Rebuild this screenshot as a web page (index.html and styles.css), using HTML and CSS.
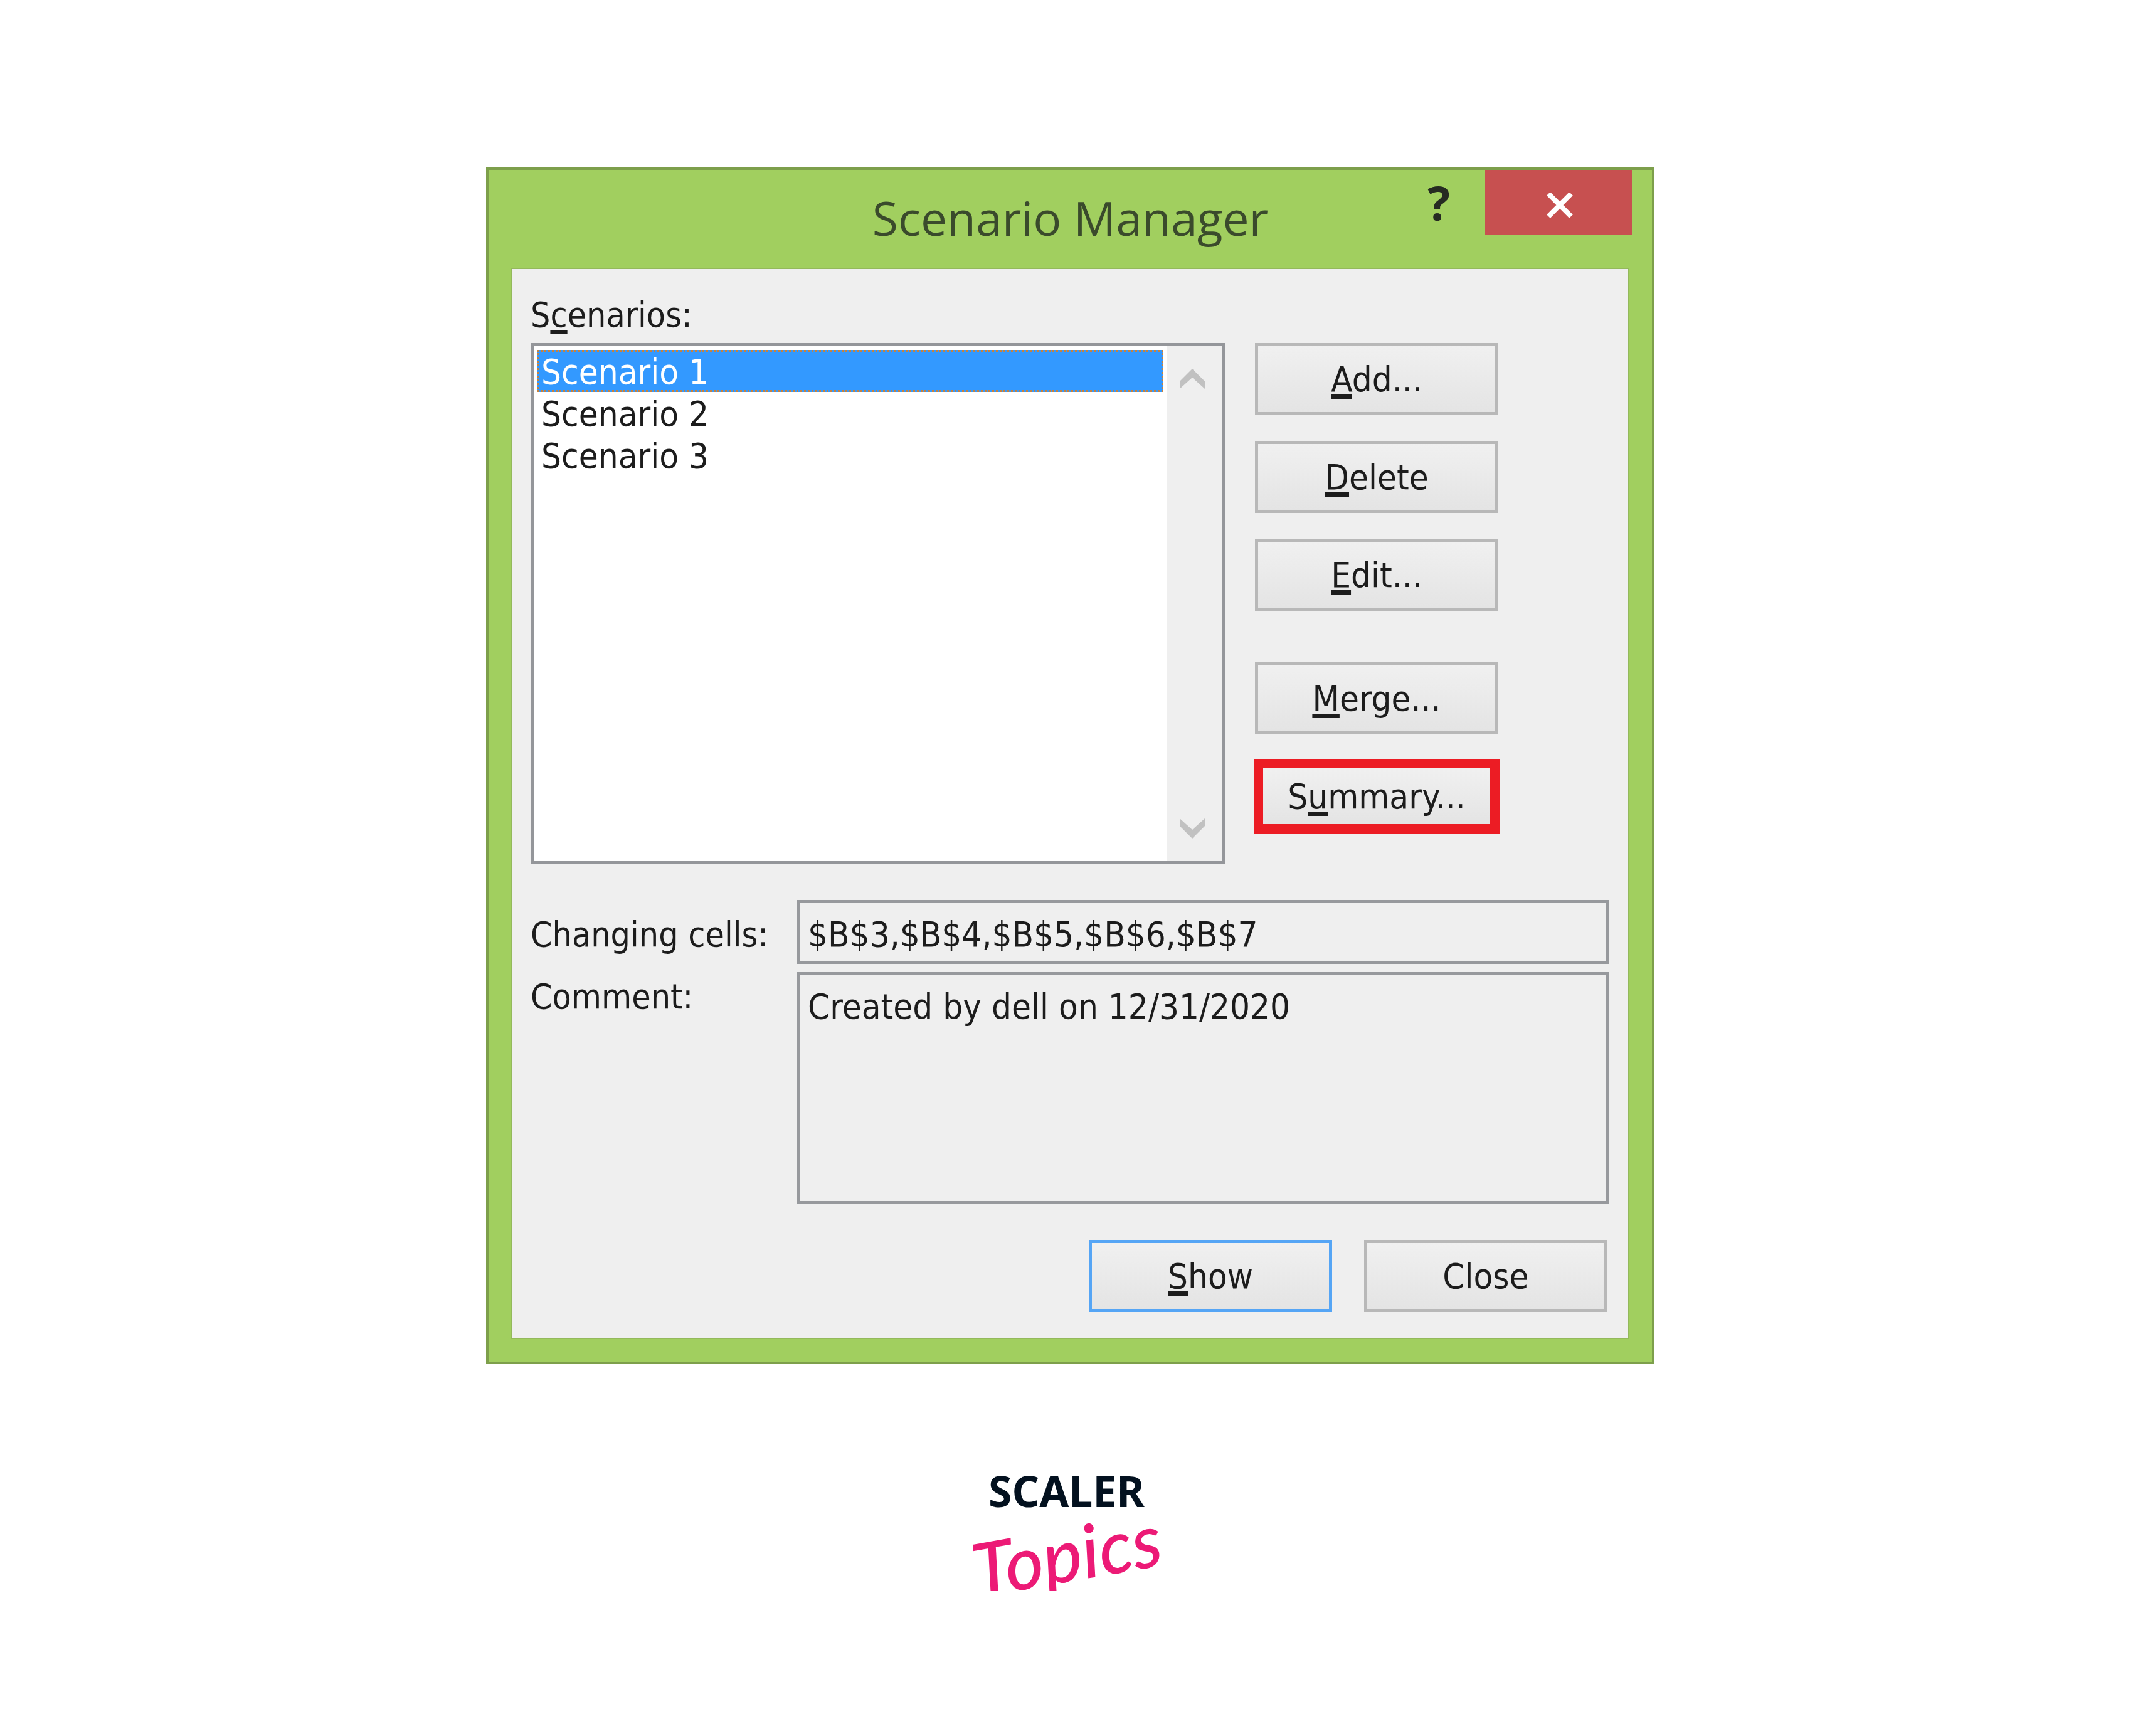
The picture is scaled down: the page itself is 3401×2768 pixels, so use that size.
FILE: index.html
```html
<!DOCTYPE html>
<html lang="en">
<head>
  <meta charset="UTF-8" />
  <meta name="viewport" content="width=device-width, initial-scale=1.0" />
  <title>Scenario Manager</title>
  <link rel="stylesheet" href="styles.css">
</head>
<body>

  <main>
    <section class="dialog">
      <header class="titlebar">
        <h1>Scenario Manager</h1>
        <div class="window-buttons">
          <button class="help" aria-label="Help">?</button>
          <button class="close" aria-label="Close window">
            <svg viewBox="0 0 46 40" width="46" height="40">
              <path d="M5 2L41 38M41 2L5 38" fill="none" stroke="#fff" stroke-width="8" />
            </svg>
          </button>
        </div>
      </header>

      <form class="client">
        <label class="list-label" for="scenarios">S<u>c</u>enarios:</label>
        <div class="top-row">
          <div class="listbox">
            <select id="scenarios" size="3">
              <option selected>Scenario 1</option>
              <option>Scenario 2</option>
              <option>Scenario 3</option>
            </select>
            <div class="scrollbar">
              <button type="button" aria-label="Scroll up">
                <svg viewBox="0 0 42 32" width="42" height="32">
                  <path d="M21 0L41 20v12L21 14 1 32V20z" fill="#c1c1c1" />
                </svg>
              </button>
              <button type="button" aria-label="Scroll down">
                <svg viewBox="0 0 42 32" width="42" height="32">
                  <path d="M21 32L41 12V0L21 18 1 0v12z" fill="#c1c1c1" />
                </svg>
              </button>
            </div>
          </div>
          <div class="actions">
            <button type="button" class="btn"><u>A</u>dd...</button>
            <button type="button" class="btn"><u>D</u>elete</button>
            <button type="button" class="btn"><u>E</u>dit...</button>
            <button type="button" class="btn second-group"><u>M</u>erge...</button>
            <button type="button" class="btn highlighted">S<u>u</u>mmary...</button>
          </div>
        </div>

        <div class="fields">
          <label for="cells">Changing cells:</label>
          <input id="cells" type="text" value="$B$3,$B$4,$B$5,$B$6,$B$7" readonly>
          <label for="comment">Comment:</label>
          <textarea id="comment" readonly>Created by dell on 12/31/2020</textarea>
        </div>

        <div class="bottom-row">
          <button type="button" class="btn default"><u>S</u>how</button>
          <button type="button" class="btn">Close</button>
        </div>
      </form>
    </section>
  </main>

  <footer class="logo">
    <span class="logo-name">SCALER</span>
    <span class="logo-sub">Topics</span>
  </footer>

</body>
</html>
```

FILE: styles.css
```css
* {
  margin: 0;
  padding: 0;
  box-sizing: border-box;
}

body {
  background: #fff;
  color: #1c1c1c;
  font-family: "DejaVu Sans Condensed", "DejaVu Sans", sans-serif;
  font-size: 55px;
  line-height: 67px;
}

main {
  padding: 267px 0 0 12px;
}

button, input, select, textarea {
  font: inherit;
  font-size: 56px;
  color: inherit;
  border: none;
  border-radius: 0;
  outline: none;
}

u {
  text-decoration-thickness: 7px;
  text-underline-offset: 5px;
  text-decoration-skip-ink: none;
}

/* window frame */
.dialog {
  max-width: 1863px;
  margin: 0 auto;
  padding: 0 36px 36px;
  background: #a1cf5f;
  border: 4px solid #7d9f4b;
}

.titlebar {
  display: grid;
  grid-template-columns: 1fr auto 1fr;
  height: 156px;
}

.titlebar h1 {
  grid-column: 2;
  font-family: "Open Sans", sans-serif;
  font-size: 75px;
  font-weight: 400;
  line-height: 152px;
  color: #3a4a2c;
}

.window-buttons {
  display: flex;
  justify-content: flex-end;
  align-items: flex-start;
  gap: 56px;
}

.help {
  background: none;
  font-family: "Open Sans", sans-serif;
  font-size: 75px;
  font-weight: 700;
  line-height: 104px;
  color: #262b22;
}

.close {
  display: flex;
  justify-content: center;
  align-items: center;
  width: 234px;
  height: 104px;
  padding: 8px 0 0 4px;
  margin-right: -4px;
  background: #c75050;
}

/* dialog content */
.client {
  padding: 40px 30px 41px 29px;
  background: #efefef;
  border: 2px solid #94b95c;
}

.list-label {
  display: block;
  margin-bottom: 11px;
}

.top-row {
  display: flex;
  gap: 47px;
}

.listbox {
  display: flex;
  flex: 0 1 1108px;
  height: 831px;
  background: #fff;
  border: 5px solid #94969a;
}

.listbox select {
  flex: 1;
  height: 100%;
  padding: 6px;
  background: #fff;
  overflow: hidden;
}

.listbox option {
  min-height: 0;
  padding: 2px 6px 0;
}

.listbox option:checked {
  color: #fff;
  background: #3399ff linear-gradient(#3399ff, #3399ff);
  outline: 3px dotted #c8823c;
  outline-offset: -3px;
}

.scrollbar {
  display: flex;
  flex-direction: column;
  justify-content: space-between;
  width: 88px;
  padding: 36px 0;
  background: #efefef;
}

.scrollbar button {
  display: flex;
  justify-content: center;
  padding-right: 8px;
  background: none;
}

.actions {
  display: flex;
  flex-direction: column;
  gap: 41px;
}

.btn {
  width: 388px;
  height: 115px;
  background: linear-gradient(#f0f0f0, #e4e4e4);
  border: 5px solid #b8b8b8;
}

.second-group {
  margin-top: 41px;
}

.highlighted {
  border: 13px solid #ec1c24;
  outline: 2px solid #ec1c24;
}

.default {
  border-color: #55a5f5;
}

.fields {
  display: grid;
  grid-template-columns: 424px 1fr;
  row-gap: 13px;
  margin: 57px 0;
}

.fields label {
  padding-top: 6px;
}

.fields label:first-child {
  padding-top: 22px;
}

.fields input,
.fields textarea {
  width: 100%;
  background: #efefef;
  border: 5px solid #97999d;
}

.fields input {
  height: 102px;
  padding: 6px 13px 0;
}

.fields textarea {
  display: block;
  height: 370px;
  padding: 16px 13px;
  resize: none;
  overflow: hidden;
}

.bottom-row {
  display: flex;
  justify-content: flex-end;
  gap: 51px;
  padding-right: 3px;
}

/* brand mark under the dialog */
.logo {
  display: flex;
  flex-direction: column;
  align-items: center;
  padding-top: 162px;
}

.logo-name {
  font-family: "Noto Sans", sans-serif;
  font-size: 68px;
  font-weight: 700;
  line-height: 80px;
  color: #03111f;
}

.logo-sub {
  font-family: Lato, sans-serif;
  font-size: 118px;
  font-style: italic;
  font-weight: 500;
  line-height: 120px;
  color: #ec1a76;
  transform: rotate(-10deg);
}
```
